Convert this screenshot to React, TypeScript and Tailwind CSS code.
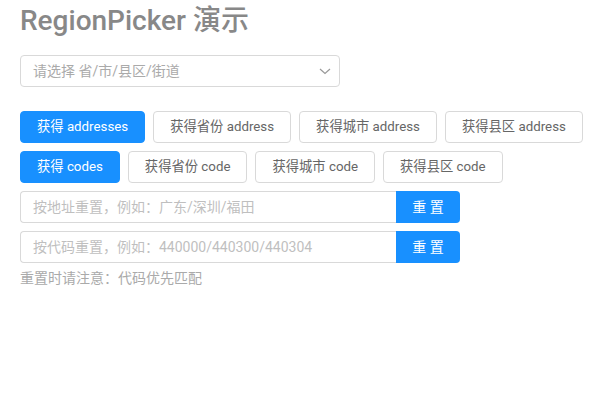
const font = { fontFamily: 'Roboto, "Noto Sans CJK SC", sans-serif' };

function Btn({ label, primary = false }: { label: string; primary?: boolean }) {
    return (
        <button
            className={
                primary
                    ? 'h-8 px-4 shrink-0 whitespace-nowrap rounded-[4px] bg-[#1890ff] border border-[#1890ff] text-white text-[13.3px]'
                    : 'h-8 px-4 shrink-0 whitespace-nowrap rounded-[4px] bg-white border border-[#d9d9d9] text-[#666] text-[13.3px]'
            }
        >
            {label}
        </button>
    );
}

function ResetInput({ placeholder }: { placeholder: string }) {
    return (
        <div className="flex h-8 w-[440px]">
            <div className="flex-1 flex items-center px-3 border border-[#d9d9d9] border-r-0 rounded-l-[4px] text-[14px] text-[#bfbfbf] whitespace-nowrap">
                {placeholder}
            </div>
            <button className="w-16 bg-[#1890ff] text-white text-[14px] rounded-r-[4px]">重 置</button>
        </div>
    );
}

export default function App() {
    return (
        <div className="w-[592px] h-[418px] bg-white px-5 pt-[1px]" style={font}>
            <h1 className="text-[28px] leading-[40px] text-[#888] font-medium whitespace-nowrap">RegionPicker 演示</h1>

            {/* Region select */}
            <div className="mt-[14px] w-[320px] h-8 flex items-center justify-between pl-3 pr-2 border border-[#d9d9d9] rounded-[4px]">
                <span className="text-[14px] text-[#aaa] whitespace-nowrap">请选择 省/市/县区/街道</span>
                <svg width="12" height="7" viewBox="0 0 12 7" fill="none">
                    <path d="M1 1l5 4.5L11 1" stroke="#999" strokeWidth="1.2" />
                </svg>
            </div>

            <div className="mt-6 flex flex-col gap-2">
                <div className="flex gap-2">
                    <Btn label="获得 addresses" primary />
                    <Btn label="获得省份 address" />
                    <Btn label="获得城市 address" />
                    <Btn label="获得县区 address" />
                </div>
                <div className="flex gap-2">
                    <Btn label="获得 codes" primary />
                    <Btn label="获得省份 code" />
                    <Btn label="获得城市 code" />
                    <Btn label="获得县区 code" />
                </div>
                <ResetInput placeholder="按地址重置，例如：广东/深圳/福田" />
                <ResetInput placeholder="按代码重置，例如：440000/440300/440304" />
            </div>

            <p className="mt-[5px] text-[14px] text-[#aaa]">重置时请注意：代码优先匹配</p>
        </div>
    );
}
